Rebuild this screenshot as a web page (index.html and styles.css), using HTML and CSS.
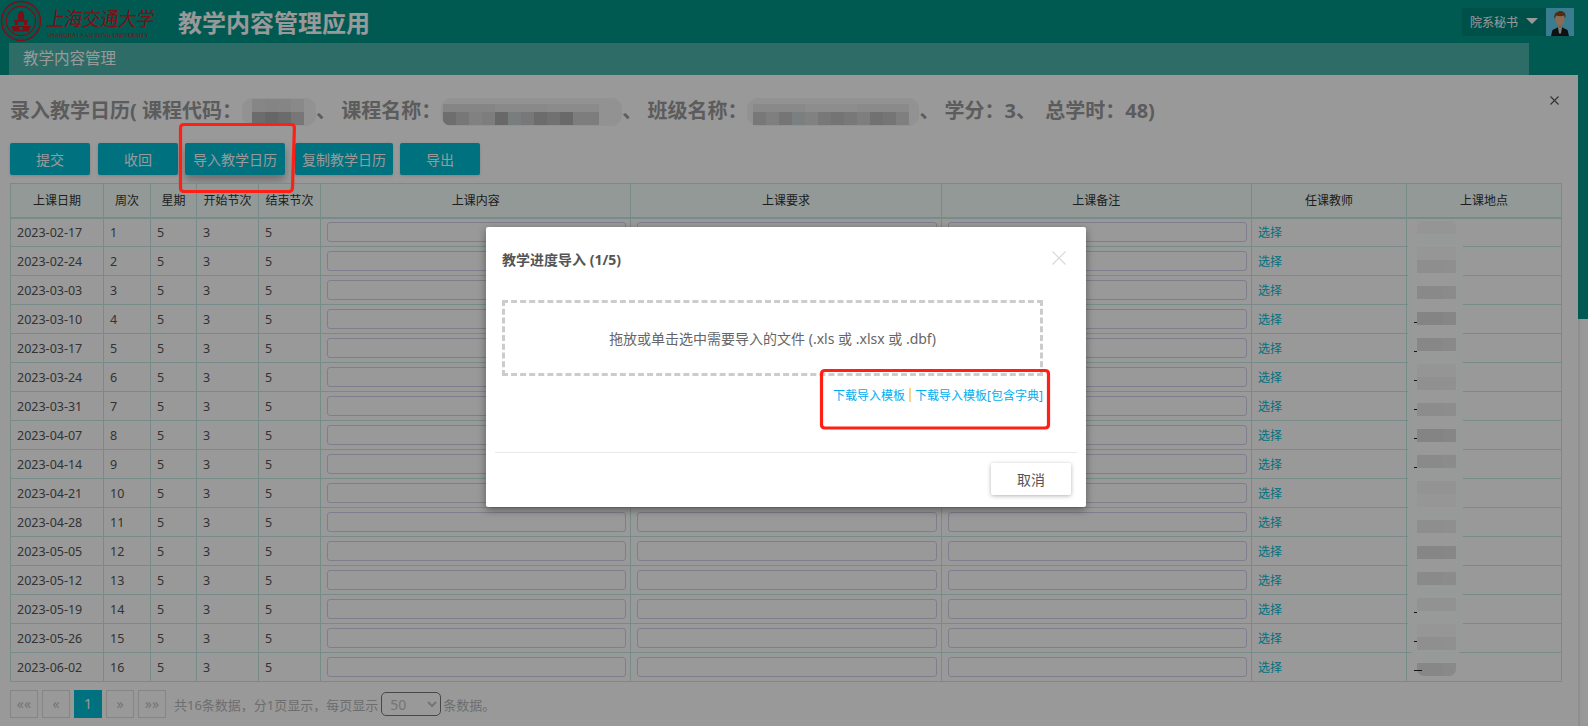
FILE: index.html
```html
<!DOCTYPE html>
<html lang="zh-CN">
<head>
  <meta charset="UTF-8">
  <title>教学内容管理应用</title>
  <link rel="stylesheet" href="styles.css">
</head>
<body>
  <div class="app">
    <div class="main">
      <header class="top-bar">
        <div class="logo">
          <svg class="logo-seal" viewBox="0 0 42 42" width="42" height="42">
            <circle cx="21" cy="21" r="19.5" fill="none" stroke="#d01824" stroke-width="1.4"/>
            <circle cx="21" cy="21" r="17.4" fill="none" stroke="#d01824" stroke-width="0.6" stroke-dasharray="1.2 1"/>
            <circle cx="21" cy="21" r="14.6" fill="none" stroke="#d01824" stroke-width="1.2"/>
            <path d="M19 11h4v2h1v7h-6v-7h1zM14 20h14v2H14zM15 22h3v3h-3zM24 22h3v3h-3z" fill="#d01824"/>
            <path d="M11 26h20l-2.5 5.5h-15z" fill="#d01824"/>
            <circle cx="21" cy="28.5" r="1.8" fill="#009688"/>
          </svg>
          <div class="logo-text">
            <div class="logo-cn">上海交通大学</div>
            <div class="logo-en">Shanghai Jiao Tong University</div>
          </div>
        </div>
        <div class="app-title">教学内容管理应用</div>
        <div class="user">
          <div class="user-menu">
            <span>院系秘书</span>
            <span class="caret"></span>
          </div>
          <svg class="avatar" viewBox="0 0 28 28" width="28" height="28">
            <rect width="28" height="28" fill="#62cff0"/>
            <path d="M5 28l1.5-6 5-2.5h5l5 2.5 1.500 6z" fill="#1c1c1f"/>
            <path d="M12 19.500h4l-1 6h-2z" fill="#b9d4df"/>
            <rect x="12" y="15" width="4" height="5" fill="#d9a77f"/>
            <ellipse cx="14" cy="12" rx="4.500" ry="5.500" fill="#e6b48c"/>
            <path d="M8.500 11c-.8-4 1-7 3-7 1-1.500 5-1.500 6 0 2 1 2.500 3.500 1.500 6.500l-1-3c-2 1-5 1-7.500 0-.8 1-1.500 2-2 3.500z" fill="#8a4a1c"/>
          </svg>
        </div>
      </header>

      <nav class="tab-bar">教学内容管理</nav>

      <section class="panel">
        <svg class="panel-close" viewBox="0 0 9 9" width="9" height="9">
          <path d="M.5.5l8 8M8.500.5l-8 8" stroke="#555" stroke-width="1.100" fill="none"/>
        </svg>

        <h2 class="page-title">
          录入教学日历( 课程代码：<span class="blur blur-code"></span>、 课程名称：<span class="blur blur-name"></span>、 班级名称：<span class="blur blur-class"></span>、 学分：3、 <span class="total-hours">总学时：48)</span>
        </h2>

        <div class="toolbar">
          <button class="btn">提交</button>
          <button class="btn">收回</button>
          <button class="btn btn-active">导入教学日历</button>
          <button class="btn btn-copy">复制教学日历</button>
          <button class="btn">导出</button>
        </div>

        <div class="table-wrap">
          <table class="calendar">
            <colgroup>
              <col class="col-date"><col class="col-week"><col class="col-day"><col class="col-start"><col class="col-end">
              <col class="col-text"><col class="col-text"><col class="col-text"><col class="col-teacher"><col class="col-place">
            </colgroup>
            <thead>
              <tr><th>上课日期</th><th>周次</th><th>星期</th><th>开始节次</th><th>结束节次</th><th>上课内容</th><th>上课要求</th><th>上课备注</th><th>任课教师</th><th>上课地点</th></tr>
            </thead>
            <tbody>
              <tr><td>2023-02-17</td><td>1</td><td>5</td><td>3</td><td>5</td><td><input></td><td><input></td><td><input></td><td><a>选择</a></td><td></td></tr>
              <tr><td>2023-02-24</td><td>2</td><td>5</td><td>3</td><td>5</td><td><input></td><td><input></td><td><input></td><td><a>选择</a></td><td></td></tr>
              <tr><td>2023-03-03</td><td>3</td><td>5</td><td>3</td><td>5</td><td><input></td><td><input></td><td><input></td><td><a>选择</a></td><td></td></tr>
              <tr><td>2023-03-10</td><td>4</td><td>5</td><td>3</td><td>5</td><td><input></td><td><input></td><td><input></td><td><a>选择</a></td><td><i class="dash"></i></td></tr>
              <tr><td>2023-03-17</td><td>5</td><td>5</td><td>3</td><td>5</td><td><input></td><td><input></td><td><input></td><td><a>选择</a></td><td><i class="dash"></i></td></tr>
              <tr><td>2023-03-24</td><td>6</td><td>5</td><td>3</td><td>5</td><td><input></td><td><input></td><td><input></td><td><a>选择</a></td><td><i class="dash"></i></td></tr>
              <tr><td>2023-03-31</td><td>7</td><td>5</td><td>3</td><td>5</td><td><input></td><td><input></td><td><input></td><td><a>选择</a></td><td><i class="dash"></i></td></tr>
              <tr><td>2023-04-07</td><td>8</td><td>5</td><td>3</td><td>5</td><td><input></td><td><input></td><td><input></td><td><a>选择</a></td><td><i class="dash"></i></td></tr>
              <tr><td>2023-04-14</td><td>9</td><td>5</td><td>3</td><td>5</td><td><input></td><td><input></td><td><input></td><td><a>选择</a></td><td><i class="dash"></i></td></tr>
              <tr><td>2023-04-21</td><td>10</td><td>5</td><td>3</td><td>5</td><td><input></td><td><input></td><td><input></td><td><a>选择</a></td><td></td></tr>
              <tr><td>2023-04-28</td><td>11</td><td>5</td><td>3</td><td>5</td><td><input></td><td><input></td><td><input></td><td><a>选择</a></td><td></td></tr>
              <tr><td>2023-05-05</td><td>12</td><td>5</td><td>3</td><td>5</td><td><input></td><td><input></td><td><input></td><td><a>选择</a></td><td></td></tr>
              <tr><td>2023-05-12</td><td>13</td><td>5</td><td>3</td><td>5</td><td><input></td><td><input></td><td><input></td><td><a>选择</a></td><td></td></tr>
              <tr><td>2023-05-19</td><td>14</td><td>5</td><td>3</td><td>5</td><td><input></td><td><input></td><td><input></td><td><a>选择</a></td><td><i class="dash"></i></td></tr>
              <tr><td>2023-05-26</td><td>15</td><td>5</td><td>3</td><td>5</td><td><input></td><td><input></td><td><input></td><td><a>选择</a></td><td><i class="dash"></i></td></tr>
              <tr><td>2023-06-02</td><td>16</td><td>5</td><td>3</td><td>5</td><td><input></td><td><input></td><td><input></td><td><a>选择</a></td><td><i class="dash dash-long"></i></td></tr>
            </tbody>
          </table>
          <div class="blur-place"></div>
        </div>

        <div class="pager">
          <a class="page-link">««</a>
          <a class="page-link">«</a>
          <a class="page-link current">1</a>
          <a class="page-link">»</a>
          <a class="page-link">»»</a>
          <span class="pager-info">共16条数据，分1页显示，每页显示</span>
          <select class="page-size"><option>50</option></select>
          <span class="pager-tail">条数据。</span>
        </div>
      </section>
    </div>

    <div class="scrollbar"><div class="scroll-thumb"></div></div>
  </div>

  <div class="backdrop"></div>

  <div class="modal">
    <div class="modal-header">
      <h3>教学进度导入 (1/5)</h3>
      <svg class="modal-close" viewBox="0 0 14 14" width="14" height="14">
        <path d="M.5.5l13 13M13.500.5l-13 13" stroke="#d8d8d8" stroke-width="1.100" fill="none"/>
      </svg>
    </div>
    <div class="dropzone">拖放或单击选中需要导入的文件 (.xls 或 .xlsx 或 .dbf)</div>
    <div class="template-links">
      <a>下载导入模板</a><span class="link-sep"></span><a>下载导入模板[包含字典]</a>
    </div>
    <div class="modal-footer">
      <button class="cancel-button">取消</button>
    </div>
  </div>

  <!-- red marks drawn on top of the screenshot -->
  <svg class="annotations" viewBox="0 0 1588 726" width="1588" height="726">
    <path d="M184 124.500H291Q294.500 124.500 294.400 128L292.500 188Q292.400 191.500 289 191.500H184Q180.500 191.500 180.500 188V128Q180.500 124.500 184 124.500Z"/>
    <path d="M825 370.500H1045Q1048.500 370.500 1048.500 374V424.500Q1048.500 428 1045 428H825Q821.500 428 821.500 424.500V374Q821.500 370.500 825 370.500Z"/>
  </svg>
</body>
</html>
```

FILE: styles.css
```css
:root {
  --teal: #009688;
  --accent: #00bcd4;
  --line: #c6e8e3;
  --cjk: "Noto Sans", "Noto Sans CJK SC", sans-serif;
}

* {
  box-sizing: border-box;
}

html, body {
  margin: 0;
  height: 726px;
  overflow: hidden;
}

body {
  font-family: var(--cjk);
  font-size: 12px;
  color: #333;
  background: #fff;
}

.app {
  display: flex;
  height: 726px;
}

.main {
  flex: 1;
  min-width: 0;
  display: flex;
  flex-direction: column;
  background: var(--teal);
}

/* header */
.top-bar {
  height: 43px;
  display: flex;
  align-items: center;
  flex-shrink: 0;
}

.logo {
  display: flex;
  align-items: flex-start;
  width: 178px;
  height: 43px;
}

.logo-seal {
  flex-shrink: 0;
}

.logo-text {
  margin-left: 5px;
  color: #d01824;
}

.logo-cn {
  font-family: "Noto Sans CJK SC", sans-serif;
  font-size: 18px;
  line-height: 24px;
  margin-top: 5px;
  transform: skewX(-8deg) scaleY(1.1);
  white-space: nowrap;
}

.logo-en {
  font-family: "Liberation Serif", serif;
  font-size: 6px;
  line-height: 8px;
  margin-top: 2px;
  text-transform: uppercase;
  white-space: nowrap;
  letter-spacing: 0.02px;
}

.app-title {
  font-size: 24px;
  font-weight: 700;
  color: #fff;
  white-space: nowrap;
  padding-bottom: 1px;
}

.user {
  margin-left: auto;
  margin-right: 4px;
  display: flex;
  height: 28px;
}

.user-menu {
  width: 84px;
  padding-left: 8px;
  display: flex;
  align-items: center;
  gap: 8px;
  color: #fff;
  background: #00867c;
}

.caret {
  width: 0;
  height: 0;
  border-left: 6px solid transparent;
  border-right: 6px solid transparent;
  border-top: 6px solid #fff;
  margin-bottom: 2px;
}

/* tab strip */
.tab-bar {
  height: 32px;
  margin: 0 49px 0 9px;
  padding-left: 14px;
  flex-shrink: 0;
  font-size: 15.500px;
  line-height: 31px;
  color: #fff;
  background: #4db6ac;
}

/* content panel */
.panel {
  position: relative;
  flex: 1;
  padding: 22px 0 0 10px;
  background: #fff;
}

.panel-close {
  position: absolute;
  right: 19px;
  top: 21px;
}

.page-title {
  margin: 0;
  height: 28px;
  font-size: 20px;
  line-height: 28px;
  font-weight: 700;
  color: #999;
  white-space: nowrap;
}

.total-hours {
  margin-left: 4px;
}

/* mosaics that hide course details: cells of 13px, on a pale halo */
.blur {
  display: inline-block;
  height: 28px;
  vertical-align: -8px;
  border-radius: 11px;
  background-repeat: no-repeat;
}

.blur-code {
  width: 74px;
  background-color: #f3f3f3;
  background-image:
    linear-gradient(to right, #e0e0e0 0 13px, #dcdcdc 13px 26px, #dedede 26px 39px, #e4e4e4 39px 52px),
    linear-gradient(to right, #b4b4b4 0 13px, #aaaaaa 13px 26px, #b2b2b2 26px 39px, #c6c6c6 39px 52px);
  background-size: 52px 13px, 52px 13px;
  background-position: 10px 1px, 10px 14px;
}

.blur-name {
  width: 181px;
  background-color: #f3f3f3;
  background-image:
    linear-gradient(to right, #dedede 0 52px, #e4e4e4 52px 104px, #e8e8e8 104px 156px),
    linear-gradient(to right, #b8b8b8 0 13px, #c6c6c6 13px 26px, #d8d8d8 26px 39px, #d0d0d0 39px 52px, #aeaeae 52px 65px, #c8d0d0 65px 78px, #c8c8c8 78px 91px, #b4b4b4 91px 104px, #bcbcbc 104px 117px, #b0b0b0 117px 130px, #d0d0d0 130px 156px);
  background-size: 156px 8px, 156px 13px;
  background-position: 2px 6px, 2px 14px;
}

.blur-class {
  width: 172px;
  background-color: #f3f3f3;
  background-image:
    linear-gradient(to right, #e4e4e4 0 52px, #ececec 52px 104px, #e6e6e6 104px 156px),
    linear-gradient(to right, #c8c8c8 0 13px, #d4d4d4 13px 26px, #c4c4c4 26px 39px, #ccd4d4 39px 52px, #d8d8d8 52px 65px, #c8c8c8 65px 78px, #c2c2c2 78px 91px, #c8c8c8 91px 104px, #d2d2d2 104px 117px, #bcbcbc 117px 130px, #c4c4c4 130px 143px, #d4d4d4 143px 156px);
  background-size: 156px 8px, 156px 13px;
  background-position: 6px 6px, 6px 14px;
}

.toolbar {
  display: flex;
  gap: 7px;
  margin-top: 18px;
}

.btn {
  width: 80px;
  height: 32px;
  padding: 0;
  border: 0;
  border-radius: 2px;
  font-family: inherit;
  font-size: 14px;
  color: #fff;
  background: var(--accent);
  box-shadow: 0 1px 3px rgba(0, 0, 0, 0.15);
}

.btn:first-child {
  margin-right: 1px;
}

.btn-active {
  width: 100px;
  margin-right: 3px;
  box-shadow: 0 5px 10px rgba(0, 0, 0, 0.3);
}

.btn-copy {
  width: 98px;
}

/* table */
.table-wrap {
  position: relative;
  width: 1552px;
  margin-top: 8px;
}

.calendar {
  width: 1552px;
  table-layout: fixed;
  border-collapse: collapse;
}

.col-date { width: 93px; }
.col-week { width: 47px; }
.col-day { width: 46px; }
.col-start { width: 62px; }
.col-end { width: 62px; }
.col-text { width: 310.300px; }
.col-teacher { width: 155px; }
.col-place { width: 155.100px; }

.calendar th,
.calendar td {
  border: 1px solid var(--line);
  padding: 0 6px;
  text-align: left;
  white-space: nowrap;
  overflow: hidden;
}

.calendar th {
  height: 34px;
  border-bottom-width: 2px;
  font-size: 12px;
  font-weight: 400;
  text-align: center;
  color: #333;
  background: #f4fffc;
}

.calendar td {
  height: 29px;
  font-size: 12.500px;
  color: #555;
}

.calendar input {
  display: block;
  width: calc(100% + 2px);
  height: 20px;
  border: 1px solid #d3d3ea;
  border-radius: 3px;
  background: transparent;
}

.calendar a {
  font-size: 12px;
  color: var(--accent);
}

.dash {
  display: block;
  position: relative;
  z-index: 2;
  width: 3px;
  height: 1px;
  margin: 7px 0 0 1px;
  background: #222;
}

.dash-long {
  width: 8px;
}

/* mosaic over the place column */
.blur-place {
  position: absolute;
  z-index: 1;
  left: 1407px;
  top: 38px;
  width: 39px;
  height: 455px;
}

.blur-place::before {
  content: "";
  position: absolute;
  left: -9px;
  right: -7px;
  top: 10px;
  bottom: 20px;
  border-radius: 12px;
  background: #fdffff;
}

.blur-place::after {
  content: "";
  position: absolute;
  inset: 0;
  border-radius: 7px;
  background-image:
    linear-gradient(to right, transparent 26px, rgba(255, 255, 255, 0.1) 26px),
    linear-gradient(to bottom,
      #f8f8f8 0 13px, #fdffff 13px 26px, #fbfbfb 26px 39px, #ededed 39px 52px, #ffffff 52px 65px,
      #e5e5e5 65px 78px, #ffffff 78px 91px, #dcdcdc 91px 104px, #ffffff 104px 117px, #e2e2e2 117px 130px,
      #fdffff 130px 143px, #f8f8f8 143px 156px, #f0f0f0 156px 169px, #ffffff 169px 182px, #e9e9e9 182px 195px,
      #ffffff 195px 208px, #dcdcdc 208px 221px, #ffffff 221px 234px, #e6e6e6 234px 247px, #fdffff 247px 260px,
      #f5f5f5 260px 273px, #fbfbfb 273px 286px, #fdffff 286px 299px, #ededed 299px 312px, #ffffff 312px 325px,
      #dfdfdf 325px 338px, #ffffff 338px 351px, #e6e6e6 351px 364px, #fdffff 364px 377px, #f3f3f3 377px 390px,
      #fdffff 390px 403px, #fbfbfb 403px 416px, #eeeeee 416px 429px, #fdffff 429px 442px, #e2e2e2 442px 455px);
}

/* pager */
.pager {
  display: flex;
  align-items: center;
  height: 28px;
  margin-top: 8px;
  color: #b8b8b8;
  font-size: 13px;
}

.page-link {
  width: 28px;
  height: 28px;
  margin-right: 4px;
  border: 1px solid #e0e0e0;
  text-align: center;
  font-size: 14px;
  line-height: 26px;
  color: #c4c4c4;
}

.page-link.current {
  border-color: var(--accent);
  color: #fff;
  background: var(--accent);
}

.pager-info {
  margin-left: 4px;
}

.page-size {
  width: 60px;
  height: 24px;
  margin: 0 2px 0 3px;
  padding-left: 4px;
  border: 1px solid #777;
  border-radius: 5px;
  font-family: inherit;
  font-size: 14px;
  color: #c4c4c4;
  background: transparent;
}

/* dialog */
.backdrop {
  position: absolute;
  inset: 0;
  z-index: 5;
  background: rgba(0, 0, 0, 0.4);
}

.modal {
  position: absolute;
  z-index: 6;
  left: 486px;
  top: 227px;
  width: 600px;
  height: 280px;
  display: flex;
  flex-direction: column;
  border-radius: 2px;
  background: #fff;
  box-shadow: 0 3px 9px rgba(0, 0, 0, 0.4);
}

.modal-header {
  position: relative;
  height: 73px;
  padding: 23px 16px 0;
}

.modal-header h3 {
  margin: 0;
  font-size: 14px;
  line-height: 20px;
  font-weight: 700;
  color: #555;
}

.modal-close {
  position: absolute;
  right: 20px;
  top: 24px;
}

.dropzone {
  height: 76px;
  width: 541px;
  margin-left: 16px;
  display: flex;
  align-items: center;
  justify-content: center;
  border: 3px dashed #ccc;
  font-size: 14px;
  color: #666;
}

.template-links {
  width: 541px;
  margin: 10px 0 0 16px;
  display: flex;
  justify-content: flex-end;
  align-items: center;
  height: 18px;
  font-size: 12px;
  color: #00aef0;
}

.link-sep {
  width: 2px;
  height: 14px;
  margin: 0 4px;
  background: #fbd38a;
}

.modal-footer {
  margin: auto 9px 0;
  height: 55px;
  padding: 10px 6px 0 0;
  display: flex;
  justify-content: flex-end;
  align-items: flex-start;
  border-top: 1px solid #e9e9e9;
}

.cancel-button {
  width: 80px;
  height: 32px;
  border: 0;
  border-radius: 2px;
  font-family: inherit;
  font-size: 14px;
  color: #555;
  background: #fff;
  box-shadow: 0 1px 4px rgba(0, 0, 0, 0.3);
}

/* scroll strip */
.scrollbar {
  width: 10px;
  flex-shrink: 0;
  background: #fff;
  box-shadow: inset 2px 0 2px rgba(0, 0, 0, 0.08);
}

.scroll-thumb {
  height: 319px;
  background: var(--teal);
}

.annotations {
  position: absolute;
  z-index: 7;
  left: 0;
  top: 0;
  pointer-events: none;
}

.annotations path {
  fill: none;
  stroke: #ff2015;
  stroke-width: 3.200;
}
```
